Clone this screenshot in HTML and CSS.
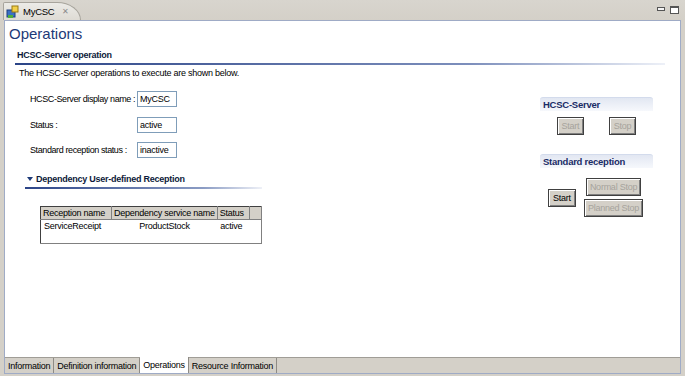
FILE: index.html
```html
<!DOCTYPE html>
<html lang="en">
<head>
    <meta charset="UTF-8">
    <title>MyCSC - Operations</title>
    <link rel="stylesheet" href="styles.css">
</head>
<body>
    <div class="tabstrip">
        <div class="editor-tab">
            <svg class="tab-icon" width="14" height="14" viewBox="0 0 14 14">
                <rect x="1" y="5" width="8" height="7" fill="#3a6fc4" stroke="#1d3f80"/>
                <rect x="6" y="1" width="6" height="6" fill="#f2d04a" stroke="#9a7a10"/>
                <rect x="2" y="10" width="5" height="3" fill="#4fae3c"/>
            </svg>
            <span class="tab-label">MyCSC</span>
            <span class="tab-close">&#x2715;</span>
        </div>
        <div class="window-controls">
            <span class="ctl-min"></span>
            <span class="ctl-max"></span>
        </div>
    </div>

    <div class="editor">
        <div class="page">
            <h1 class="page-title">Operations</h1>
            <div class="section-head">HCSC-Server operation</div>
            <p class="section-desc">The HCSC-Server operations to execute are shown below.</p>

            <div class="page-body">
                <div class="left-col">
                    <div class="form-grid">
                        <span class="form-label">HCSC-Server display name :</span>
                        <span class="field">MyCSC</span>
                        <span class="form-label">Status :</span>
                        <span class="field">active</span>
                        <span class="form-label">Standard reception status :</span>
                        <span class="field">inactive</span>
                    </div>

                    <div class="subsection-head">
                        <span class="twisty"></span>Dependency User-defined Reception
                    </div>

                    <table class="rec-table">
                        <thead>
                            <tr>
                                <th class="col-name">Reception name</th>
                                <th class="col-dep">Dependency service name</th>
                                <th class="col-status">Status</th>
                                <th class="col-fill"></th>
                            </tr>
                        </thead>
                        <tbody>
                            <tr>
                                <td>ServiceReceipt</td>
                                <td class="center">ProductStock</td>
                                <td>active</td>
                                <td></td>
                            </tr>
                            <tr class="empty-row"><td></td><td></td><td></td><td></td></tr>
                        </tbody>
                    </table>
                </div>

                <div class="right-col">
                    <div class="panel">
                        <div class="panel-head">HCSC-Server</div>
                        <div class="server-buttons">
                            <button class="btn" disabled>Start</button>
                            <button class="btn" disabled>Stop</button>
                        </div>
                    </div>
                    <div class="panel">
                        <div class="panel-head">Standard reception</div>
                        <div class="reception-buttons">
                            <button class="btn">Start</button>
                            <div class="stop-stack">
                                <button class="btn" disabled>Normal Stop</button>
                                <button class="btn" disabled>Planned Stop</button>
                            </div>
                        </div>
                    </div>
                </div>
            </div>
        </div>

        <div class="page-tabs">
            <span class="page-tab">Information</span>
            <span class="page-tab">Definition information</span>
            <span class="page-tab active">Operations</span>
            <span class="page-tab">Resource Information</span>
        </div>
    </div>
</body>
</html>
```

FILE: styles.css
```css
* {
    margin: 0;
    padding: 0;
    box-sizing: border-box;
}

body {
    width: 685px;
    height: 376px;
    background: #d4d0c8;
    font-family: 'Liberation Sans', Arial, sans-serif;
    font-size: 9px;
    letter-spacing: -0.25px;
    color: #000;
    display: flex;
    flex-direction: column;
    overflow: hidden;
}

/* Top editor tab strip */
.tabstrip {
    height: 20px;
    display: flex;
    align-items: flex-end;
    justify-content: space-between;
    padding-left: 3px;
    padding-right: 6px;
    background: linear-gradient(#d8d5ce, #d4d0c8);
}

.editor-tab {
    height: 18px;
    width: 78px;
    display: flex;
    align-items: center;
    gap: 3px;
    padding-left: 2px;
    background: linear-gradient(#ecebe7, #dedbd4);
    border: 1px solid #a7a49c;
    border-bottom: none;
    border-top-right-radius: 24px 18px;
    border-top-left-radius: 2px;
}

.tab-label {
    font-size: 9.5px;
}

.tab-close {
    font-size: 8px;
    color: #8a8a8a;
    margin-left: 5px;
}

.window-controls {
    display: flex;
    align-items: flex-start;
    gap: 5px;
    align-self: flex-start;
    padding-top: 6px;
}

.ctl-min {
    width: 8px;
    height: 4px;
    border: 1px solid #555;
    background: #f4f4f4;
    margin-top: 1px;
}

.ctl-max {
    width: 9px;
    height: 8px;
    border: 1px solid #555;
    border-top-width: 2px;
    background: #fff;
}

/* Editor frame */
.editor {
    height: 354px;
    margin: 0 4px 2px 4px;
    border: 1px solid #9fabc6;
    display: flex;
    flex-direction: column;
    background: #fff;
}

.page {
    flex: 1;
    padding: 4px 15px 0 4px;
    background: #fff;
}

.page-title {
    font-size: 15px;
    font-weight: normal;
    letter-spacing: 0;
    color: #1d3a78;
    line-height: 18px;
}

.section-head {
    margin: 7px 0 0 6px;
    padding: 0 0 3px 2px;
    font-weight: bold;
    color: #0d1a3a;
    border-bottom: 2px solid;
    border-image: linear-gradient(90deg, #2b4487, #7d8fbc 70%, #eef1f8) 1;
}

.section-desc {
    margin: 3px 0 0 10px;
}

.page-body {
    display: flex;
    justify-content: space-between;
}

.left-col {
    padding-left: 21px;
    width: 260px;
}

.form-grid {
    display: grid;
    grid-template-columns: 107px 40px;
    row-gap: 9.5px;
    align-items: center;
    margin-top: 13px;
}

.form-label {
    white-space: nowrap;
    letter-spacing: -0.4px;
}

.field {
    height: 16px;
    border: 1px solid #7f9db9;
    padding: 1px 2px;
    line-height: 12px;
}

.subsection-head {
    margin: 16px 0 0 -5px;
    width: 237px;
    padding: 0 0 3px 2px;
    font-weight: bold;
    color: #0d1a3a;
    display: flex;
    align-items: center;
    gap: 3px;
    border-bottom: 2px solid;
    border-image: linear-gradient(90deg, #2b4487, #8b9cc4 75%, #f0f2f8) 1;
}

.twisty {
    width: 0;
    height: 0;
    border-left: 3px solid transparent;
    border-right: 3px solid transparent;
    border-top: 4px solid #1d3a78;
}

.rec-table {
    margin: 17px 0 0 10px;
    width: 222px;
    border-collapse: collapse;
    border: 1px solid #808080;
    border-top-color: #404040;
    border-left-color: #404040;
}

.rec-table th {
    height: 13px;
    background: #d4d0c8;
    font-weight: normal;
    text-align: left;
    padding: 0 2px;
    border-right: 1px solid #808080;
    border-bottom: 1px solid #808080;
    white-space: nowrap;
}

.rec-table th.col-fill {
    border-right: none;
}

.col-name { width: 71px; }
.col-dep { width: 102px; }
.col-status { width: 32px; }

.rec-table td {
    height: 13px;
    padding: 0 3px;
    white-space: nowrap;
}

.rec-table td.center {
    text-align: center;
}

.empty-row td {
    height: 11px;
}

/* Right side panels */
.right-col {
    width: 113px;
    margin-top: 19px;
    margin-right: 12px;
    display: flex;
    flex-direction: column;
    gap: 19px;
}

.panel-head {
    height: 14px;
    padding-left: 3px;
    font-weight: bold;
    font-size: 9.5px;
    color: #1a2c66;
    line-height: 13px;
    background: linear-gradient(#e2e7f2, #f6f8fc);
    border-top: 1px solid #d3dbec;
    border-radius: 3px 3px 0 0;
}

.btn {
    font-family: 'Liberation Sans', Arial, sans-serif;
    font-size: 9px;
    letter-spacing: -0.25px;
    height: 18px;
    padding: 0 3px;
    background: #d4d0c8;
    color: #000;
    border: 1px solid #404040;
    box-shadow: inset 1px 1px 0 #fff, inset -1px -1px 0 #808080;
}

.btn:disabled {
    color: #a6a39c;
}

.server-buttons {
    display: flex;
    gap: 25px;
    padding: 6px 0 0 17px;
}

.server-buttons .btn {
    width: 27px;
}

.reception-buttons {
    display: flex;
    align-items: center;
    gap: 8px;
    padding: 10px 0 0 8px;
}

.reception-buttons > .btn {
    width: 28px;
}

.stop-stack {
    display: flex;
    flex-direction: column;
    align-items: center;
    gap: 3px;
}

/* Bottom page tabs */
.page-tabs {
    height: 16px;
    display: flex;
    background: #d4d0c8;
    border-top: 1px solid #a09d96;
}

.page-tab {
    padding: 1px 3px 0 3px;
    border-right: 1px solid #8e8b85;
    line-height: 14px;
    white-space: nowrap;
}

.page-tab.active {
    background: #fff;
    margin-top: -1px;
}
```
